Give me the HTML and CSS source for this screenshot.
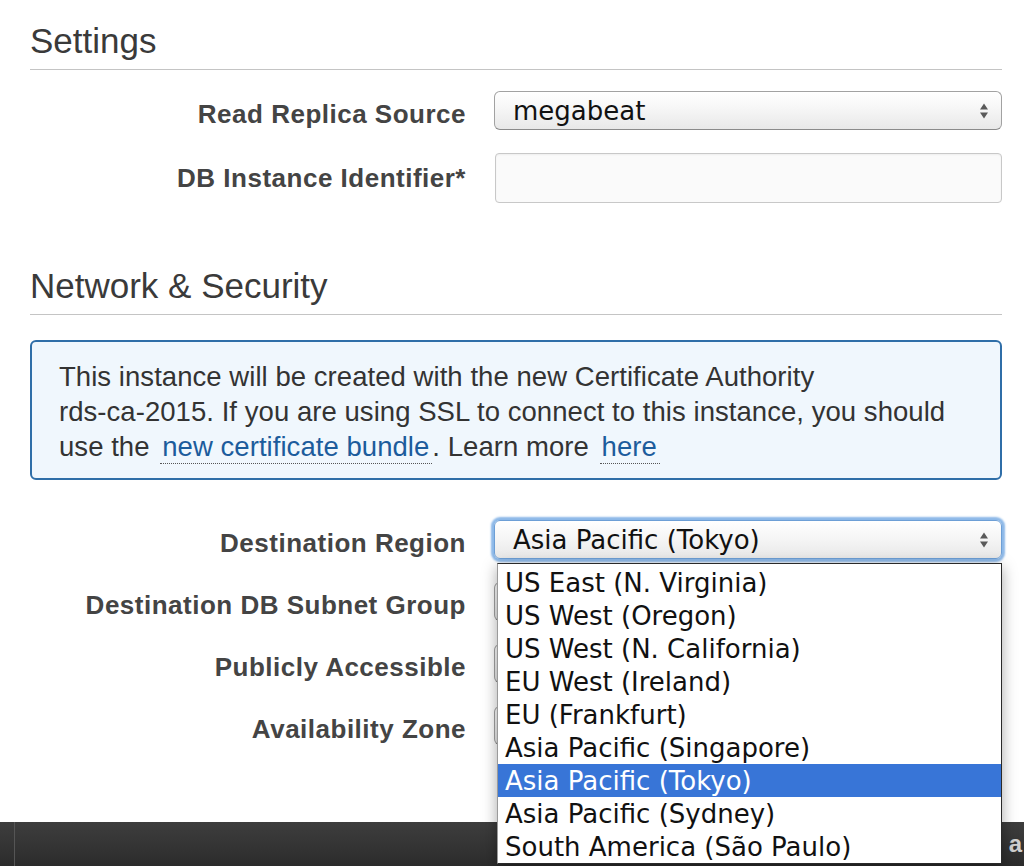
FILE: index.html
```html
<!DOCTYPE html>
<html lang="en">
<head>
<meta charset="utf-8">
<title>Create Read Replica</title>
<link rel="stylesheet" href="styles.css">
</head>
<body>
<div class="page">
  <section class="section section-settings">
    <h2 class="section-title">Settings</h2>
    <div class="form-row">
      <div class="field-label">Read Replica Source</div>
      <div class="control">
        <div class="select">
          <span class="select-value">megabeat</span>
          <svg class="select-arrows" width="10" height="18" viewBox="0 0 10 18"><path d="M5 1.5 L9 7.5 H1 Z M5 16.5 L9 10.5 H1 Z" fill="#5a5a5a"/></svg>
        </div>
      </div>
    </div>
    <div class="form-row form-row-input">
      <div class="field-label">DB Instance Identifier*</div>
      <div class="control">
        <div class="text-input"></div>
      </div>
    </div>
  </section>

  <section class="section section-network">
    <h2 class="section-title">Network &amp; Security</h2>
    <div class="info-box">
      This instance will be created with the new Certificate Authority<br>
      rds-ca-2015. If you are using SSL to connect to this instance, you should<br>
      use the <a class="info-link" href="#">new certificate bundle</a>. Learn more <a class="info-link" href="#">here</a>
    </div>

    <div class="form-row form-row-first">
      <div class="field-label">Destination Region</div>
      <div class="control control-open">
        <div class="select select-focus">
          <span class="select-value">Asia Pacific (Tokyo)</span>
          <svg class="select-arrows" width="10" height="18" viewBox="0 0 10 18"><path d="M5 1.5 L9 7.5 H1 Z M5 16.5 L9 10.5 H1 Z" fill="#5a5a5a"/></svg>
        </div>
        <ul class="dropdown">
          <li class="dropdown-item">US East (N. Virginia)</li>
          <li class="dropdown-item">US West (Oregon)</li>
          <li class="dropdown-item">US West (N. California)</li>
          <li class="dropdown-item">EU West (Ireland)</li>
          <li class="dropdown-item">EU (Frankfurt)</li>
          <li class="dropdown-item">Asia Pacific (Singapore)</li>
          <li class="dropdown-item dropdown-item-selected">Asia Pacific (Tokyo)</li>
          <li class="dropdown-item">Asia Pacific (Sydney)</li>
          <li class="dropdown-item">South America (São Paulo)</li>
        </ul>
      </div>
    </div>
    <div class="form-row">
      <div class="field-label">Destination DB Subnet Group</div>
      <div class="control"><div class="select"></div></div>
    </div>
    <div class="form-row">
      <div class="field-label">Publicly Accessible</div>
      <div class="control"><div class="select"></div></div>
    </div>
    <div class="form-row">
      <div class="field-label">Availability Zone</div>
      <div class="control"><div class="select"></div></div>
    </div>
  </section>
</div>
<footer class="bottom-bar">
  <span class="bottom-divider"></span>
  <span class="bottom-text">s a</span>
</footer>
</body>
</html>
```

FILE: styles.css
```css
html, body {
  margin: 0;
  padding: 0;
}

body {
  width: 1024px;
  height: 866px;
  overflow: hidden;
  background: #ffffff;
  display: flex;
  flex-direction: column;
  font-family: "Liberation Sans", Arial, sans-serif;
  color: #333;
}

.page {
  flex: 1;
  padding: 0 22px 0 30px;
}

.section-title {
  margin: 0;
  font-family: "Liberation Sans", Arial, sans-serif;
  font-weight: normal;
  font-size: 35px;
  line-height: 40px;
  color: #3a3a3a;
  padding-bottom: 8px;
  border-bottom: 1px solid #c4c4c4;
}

.section-settings .section-title {
  margin-top: 21px;
}

.section-network .section-title {
  margin-top: 63px;
}

.form-row {
  display: flex;
  align-items: center;
  gap: 28px;
  margin-top: 23px;
  height: 39px;
}

.section-settings .form-row:first-of-type {
  margin-top: 21px;
}

.form-row-input {
  height: 50px;
}

.form-row-input .field-label {
  padding-top: 0;
}

.form-row-first {
  margin-top: 40px;
}

.field-label {
  width: 436px;
  flex: none;
  text-align: right;
  font-weight: bold;
  font-size: 26px;
  letter-spacing: 0.5px;
  color: #444;
  padding-top: 8px;
  white-space: nowrap;
}

.control {
  flex: none;
  width: 508px;
  height: 100%;
}

.control-open {
  position: relative;
}

.select {
  box-sizing: border-box;
  height: 100%;
  border: 1px solid #a2a2a2;
  border-bottom-color: #8a8a8a;
  border-radius: 6px;
  background: linear-gradient(to bottom, #ffffff 0%, #f6f6f6 45%, #e8e8e8 100%);
  box-shadow: inset 0 1px 0 #ffffff;
  display: flex;
  align-items: center;
  justify-content: space-between;
  padding: 0 12px 0 18px;
}

.select-focus {
  border-color: #6d9fd6;
  box-shadow: 0 0 2px 3px #8cb8e8;
}

.select-value {
  font-family: "DejaVu Sans", "Verdana", sans-serif;
  font-size: 26px;
  color: #111;
  white-space: nowrap;
}

.select-arrows {
  flex: none;
}

.text-input {
  box-sizing: border-box;
  height: 100%;
  margin-left: 1px;
  border: 1px solid #c8c8c8;
  border-radius: 4px;
  background: #fafafa;
  box-shadow: inset 0 1px 2px rgba(0, 0, 0, 0.05);
}

.info-box {
  margin-top: 25px;
  box-sizing: border-box;
  height: 140px;
  border: 2px solid #2f6ea8;
  border-radius: 6px;
  background: #f0f7fd;
  padding: 17px 10px 0 27px;
  font-size: 27.5px;
  line-height: 35px;
  letter-spacing: 0.05px;
  color: #333;
  white-space: nowrap;
}

.info-link {
  color: #1c5c9c;
  text-decoration: none;
  border-bottom: 1px dotted #555;
  padding: 0 3px 1px 2px;
  margin-left: 3px;
}

.dropdown {
  position: absolute;
  z-index: 10;
  top: calc(100% + 4px);
  left: 3px;
  width: 505px;
  box-sizing: border-box;
  margin: 0;
  padding: 2px 0 0 0;
  list-style: none;
  background: #ffffff;
  border: 1px solid #2a2a2a;
  border-left-color: #9a9a9a;
  box-shadow: 0 4px 14px rgba(0, 0, 0, 0.35);
}

.dropdown-item {
  height: 33px;
  line-height: 35px;
  padding-left: 7px;
  font-family: "DejaVu Sans", "Verdana", sans-serif;
  font-size: 26px;
  color: #111;
  white-space: nowrap;
}

.dropdown-item-selected {
  background: #3875d7;
  color: #ffffff;
}

.bottom-bar {
  flex: none;
  height: 44px;
  background: linear-gradient(to bottom, #3d3d3d 0%, #353535 50%, #2b2b2b 100%);
  display: flex;
  align-items: center;
  justify-content: space-between;
  padding-left: 14px;
}

.bottom-divider {
  width: 1px;
  height: 100%;
  background: #555;
}

.bottom-text {
  font-family: "Liberation Sans", Arial, sans-serif;
  font-weight: bold;
  font-size: 24px;
  color: #d0d0d0;
  margin-right: 2px;
}
```
